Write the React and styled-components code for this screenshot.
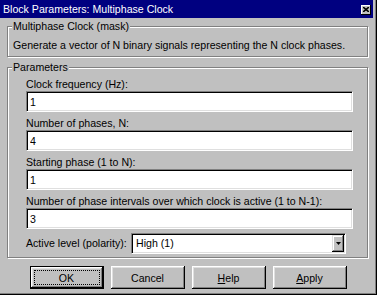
import React from "react";
import styled, { createGlobalStyle, css } from "styled-components";

const Global = createGlobalStyle`
  html, body { margin: 0; padding: 0; background: #ffffff; }
  * { box-sizing: border-box; }
`;

const Window = styled.div`
  width: 377px;
  height: 295px;
  background: #c0c0c0;
  border-right: 1px solid #000;
  border-bottom: 1px solid #000;
  box-shadow: inset -1px -1px 0 #808080;
  padding-right: 3px;
  display: flex;
  flex-direction: column;
  font-family: "Liberation Sans", Arial, sans-serif;
  font-size: 10.6px;
  color: #000;
`;

const TitleBar = styled.div`
  height: 18px;
  background: #000080;
  color: #fff;
  display: flex;
  justify-content: space-between;
  align-items: flex-start;
  padding: 0 2px 0 3px;
`;

const TitleText = styled.span`
  line-height: 18px;
  white-space: nowrap;
`;

const CloseButton = styled.div`
  width: 10px;
  height: 10px;
  margin-top: 5px;
  background: #c0c0c0;
  box-shadow: inset -1px -1px 0 #000, inset 1px 1px 0 #fff;
  display: flex;
  align-items: center;
  justify-content: center;
  padding: 0 1px 1px 0;
`;

const Body = styled.div`
  display: flex;
  flex-direction: column;
  padding: 8px 5px 0 7px;
`;

const GroupBox = styled.div`
  position: relative;
  border: 1px solid #808080;
  box-shadow: 1px 1px 0 #fff, inset 1px 1px 0 #fff;
  padding: ${(p) => p.$pad};
  margin-bottom: ${(p) => p.$mb || "0"};
`;

const GroupLabel = styled.span`
  position: absolute;
  top: -7px;
  left: 4px;
  padding: 0 1px;
  background: #c0c0c0;
  line-height: 13px;
  white-space: nowrap;
`;

const Description = styled.div`
  line-height: 13px;
  white-space: nowrap;
`;

const Fields = styled.div`
  display: flex;
  flex-direction: column;
  gap: 5px;
`;

const Field = styled.div`
  display: flex;
  flex-direction: column;
`;

const FieldLabel = styled.label`
  line-height: 13px;
  white-space: nowrap;
`;

const sunken = css`
  border: 1px solid;
  border-color: #808080 #fff #fff #808080;
  box-shadow: inset 1px 1px 0 #000, inset -1px -1px 0 #dfdfdf;
  background: #fff;
`;

const TextInput = styled.input`
  ${sunken};
  width: 100%;
  height: 21px;
  padding: 0 0 0 3px;
  margin: 0;
  font: inherit;
  color: #000;
  outline: none;
`;

const SelectRow = styled.div`
  display: flex;
  align-items: center;
  margin-top: -1px;
`;

const SelectLabel = styled.span`
  width: 105px;
  line-height: 13px;
  white-space: nowrap;
`;

const Select = styled.div`
  ${sunken};
  width: 215px;
  height: 21px;
  padding: 1px;
  display: flex;
`;

const SelectValue = styled.span`
  flex: 1;
  line-height: 17px;
  padding-left: 3px;
`;

const DropButton = styled.div`
  width: 12px;
  background: #c0c0c0;
  box-shadow: inset -1px -1px 0 #000, inset 1px 1px 0 #dfdfdf,
    inset -2px -2px 0 #808080, inset 2px 2px 0 #fff;
  display: flex;
  align-items: center;
  justify-content: center;
`;

const ButtonRow = styled.div`
  display: flex;
  justify-content: center;
  gap: 7px;
  margin-top: 8px;
  padding-left: 1px;
`;

const Button = styled.button`
  position: relative;
  width: 74px;
  height: 23px;
  margin: 0;
  padding: 0;
  background: #c0c0c0;
  font: inherit;
  color: #000;
  border: ${(p) => (p.$default ? "1px solid #000" : "none")};
  box-shadow: inset -1px -1px 0 #000, inset 1px 1px 0 #fff,
    inset -2px -2px 0 #808080, inset 2px 2px 0 #dfdfdf;
  ${(p) =>
    p.$default &&
    css`
      &::after {
        content: "";
        position: absolute;
        left: 3px;
        top: 3px;
        right: 3px;
        bottom: 3px;
        border: 1px dotted #000;
      }
    `}
`;

export default function App() {
  return (
    <>
      <Global />
      <Window>
        <TitleBar>
          <TitleText>Block Parameters: Multiphase Clock</TitleText>
          <CloseButton>
            <svg width="6" height="5" viewBox="0 0 6 5">
              <path d="M0 0 L6 5 M6 0 L0 5" stroke="#000" strokeWidth="1.6" />
            </svg>
          </CloseButton>
        </TitleBar>
        <Body>
          <GroupBox $pad="12px 0 4px 5px" $mb="10px">
            <GroupLabel>Multiphase Clock (mask)</GroupLabel>
            <Description>
              Generate a vector of N binary signals representing the N clock phases.
            </Description>
          </GroupBox>
          <GroupBox $pad="10px 14px 3px 18px">
            <GroupLabel>Parameters</GroupLabel>
            <Fields>
              <Field>
                <FieldLabel>Clock frequency (Hz):</FieldLabel>
                <TextInput defaultValue="1" />
              </Field>
              <Field>
                <FieldLabel>Number of phases, N:</FieldLabel>
                <TextInput defaultValue="4" />
              </Field>
              <Field>
                <FieldLabel>Starting phase (1 to N):</FieldLabel>
                <TextInput defaultValue="1" />
              </Field>
              <Field>
                <FieldLabel>
                  Number of phase intervals over which clock is active (1 to N-1):
                </FieldLabel>
                <TextInput defaultValue="3" />
              </Field>
              <SelectRow>
                <SelectLabel>Active level (polarity):</SelectLabel>
                <Select>
                  <SelectValue>High (1)</SelectValue>
                  <DropButton>
                    <svg width="5" height="3" viewBox="0 0 5 3">
                      <path d="M0 0 H5 L2.5 3 Z" fill="#000" />
                    </svg>
                  </DropButton>
                </Select>
              </SelectRow>
            </Fields>
          </GroupBox>
          <ButtonRow>
            <Button $default>OK</Button>
            <Button>Cancel</Button>
            <Button>
              <u>H</u>elp
            </Button>
            <Button>
              <u>A</u>pply
            </Button>
          </ButtonRow>
        </Body>
      </Window>
    </>
  );
}
